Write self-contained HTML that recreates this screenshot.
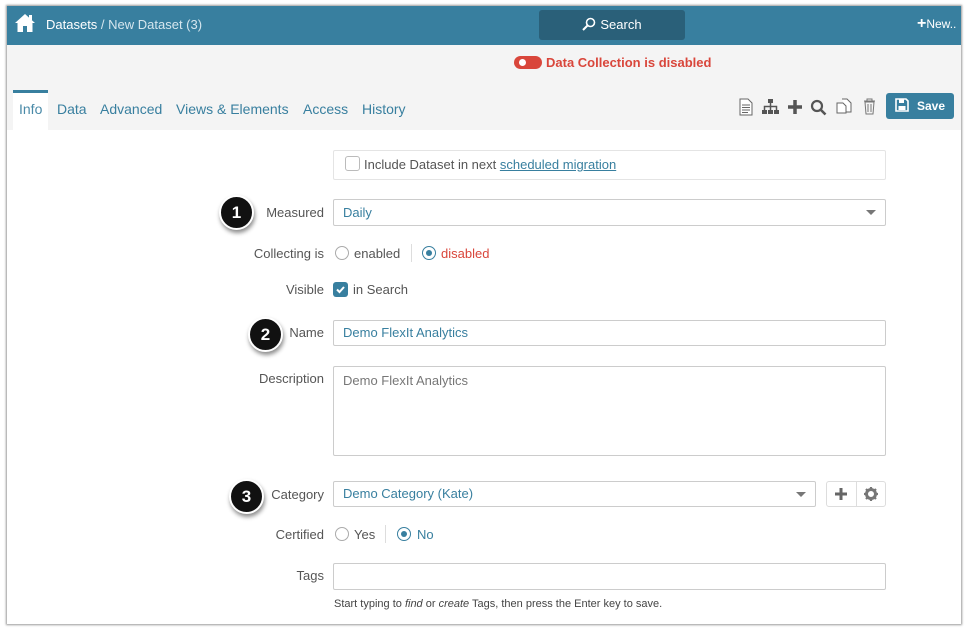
<!DOCTYPE html>
<html><head><style>
*{box-sizing:border-box;margin:0;padding:0}
body{width:968px;height:628px;background:#fff;font-family:"Liberation Sans",Arial,sans-serif;font-size:13px;color:#555;position:relative;overflow:hidden}
.frame{position:absolute;left:7px;top:6px;width:954px;height:618px;background:#fff;box-shadow:0 0 2px 1px #999;overflow:hidden}
.top{position:absolute;left:0;top:0;width:954px;height:39px;background:#387f9f;color:#fff}
.gray{position:absolute;left:0;top:39px;width:954px;height:85px;background:#f4f4f4}
.a{position:absolute;white-space:nowrap}
.lbl{position:absolute;right:637px;text-align:right;color:#555;font-size:13px}
.inp{position:absolute;left:326px;border:1px solid #ccc;border-radius:2px;background:#fff;color:#387f9f;padding-left:9px;font-size:13px}
.badge{position:absolute;border-radius:50%;background:#111;color:#fff;font-weight:bold;font-size:17px;text-align:center;box-shadow:1px 3px 4px rgba(0,0,0,.45);border:2px solid #fff;width:35px;height:35px;line-height:31px}
.radio{position:absolute;width:14px;height:14px;border:1px solid #aaa;border-radius:50%;background:#fff}
.radio.on{border-color:#387f9f}
.radio.on:after{content:"";position:absolute;left:3px;top:3px;width:6px;height:6px;border-radius:50%;background:#387f9f}
.tab{position:absolute;top:95px;color:#387f9f;font-size:14px}
</style></head><body>
<div class="frame">
<div class="top">
<svg class="a" style="left:7px;top:7px" width="22" height="20" viewBox="0 0 22 20"><path d="M11 1 L1 10 L3.5 10 L3.5 19 L9 19 L9 13 L13 13 L13 19 L18.5 19 L18.5 10 L21 10 Z" fill="#fff"/><rect x="15" y="2" width="3" height="5" fill="#fff"/></svg>
<div class="a" style="left:39px;top:11px;font-size:13px;color:#fff">Datasets <span style="color:#d5e6ee">/ New Dataset (3)</span></div>
<div class="a" style="left:532px;top:4px;width:146px;height:30px;background:#2a6079;border-radius:3px;color:#fff;font-size:13px;text-align:center;line-height:30px"><svg width="14" height="14" viewBox="0 0 14 14" style="vertical-align:-2px;margin-right:4px"><circle cx="8.5" cy="5.5" r="4" fill="none" stroke="#fff" stroke-width="1.6"/><path d="M5.5 8.5 L1 13" stroke="#fff" stroke-width="2"/></svg>Search</div>
<div class="a" style="left:910px;top:11px;color:#fff;font-size:12px"><b style="font-size:16px;line-height:12px">+</b>New..</div>
</div>
<div class="gray"></div>
<div class="a" style="left:507px;top:50px;width:28px;height:13px;border-radius:7px;background:#d9463b"><div style="position:absolute;left:5px;top:3px;width:7px;height:7px;border-radius:50%;background:#fff"></div></div>
<div class="a" style="left:539px;top:49px;color:#d9463b;font-weight:bold;font-size:13px">Data Collection is disabled</div>
<div class="a" style="left:6px;top:84px;width:35px;height:40px;background:#fff;border-top:3px solid #387f9f"></div>
<div class="tab" style="left:12px;color:#4a8aa8">Info</div>
<div class="tab" style="left:50px">Data</div>
<div class="tab" style="left:93px">Advanced</div>
<div class="tab" style="left:169px">Views &amp; Elements</div>
<div class="tab" style="left:296px">Access</div>
<div class="tab" style="left:355px">History</div>
<svg class="a" style="left:731px;top:92px" width="16" height="18" viewBox="0 0 16 18"><path d="M2 1h8l4 4v12H2z" fill="#fff" stroke="#666"/><path d="M4 7h8M4 9.5h8M4 12h8M4 14.5h6" stroke="#666"/></svg>
<svg class="a" style="left:755px;top:93px" width="17" height="16" viewBox="0 0 17 16"><rect x="6" y="0" width="5" height="4" fill="#555"/><rect x="0" y="11" width="5" height="4" fill="#555"/><rect x="6" y="11" width="5" height="4" fill="#555"/><rect x="12" y="11" width="5" height="4" fill="#555"/><path d="M8.5 4v7M2.5 11V7.5h12V11" stroke="#555" stroke-width="1.5" fill="none"/></svg>
<svg class="a" style="left:781px;top:94px" width="14" height="14"><path d="M7 0v14M0 7h14" stroke="#555" stroke-width="3.5"/></svg>
<svg class="a" style="left:803px;top:93px" width="17" height="17"><circle cx="7" cy="7" r="5" fill="none" stroke="#555" stroke-width="2.2"/><path d="M10.5 10.5l5 5" stroke="#555" stroke-width="2.6"/></svg>
<svg class="a" style="left:829px;top:92px" width="17" height="17"><path d="M1 5h6l3 3v7H1z M6 1h5l4 4v9h-5" fill="#fff" stroke="#666"/></svg>
<svg class="a" style="left:856px;top:92px" width="13" height="17"><path d="M1 3h11M4 3V1h5v2M2 4h9l-1 12H3z" fill="none" stroke="#777"/><path d="M5 6v8M8 6v8" stroke="#777"/></svg>
<div class="a" style="left:879px;top:87px;width:68px;height:26px;background:#387f9f;border-radius:3px;color:#fff;font-weight:bold;font-size:12px;line-height:26px;padding-left:9px"><svg width="14" height="14" viewBox="0 0 14 14" style="vertical-align:-2px;margin-right:8px"><path d="M1 1h10l2 2v10H1z" fill="none" stroke="#fff" stroke-width="1.6"/><rect x="4" y="1.5" width="5" height="3.5" fill="#fff"/><rect x="3.5" y="8" width="7" height="4" fill="#fff"/></svg>Save</div>

<div class="a" style="left:326px;top:144px;width:553px;height:30px;border:1px solid #e4e4e4;border-radius:2px"></div>
<div class="a" style="left:338px;top:150px;width:15px;height:15px;border:1px solid #bbb;border-radius:3px"></div>
<div class="a" style="left:357px;top:151px;color:#555">Include Dataset in next <span style="color:#387f9f;text-decoration:underline">scheduled migration</span></div>

<div class="badge" style="left:212px;top:189px">1</div>
<div class="lbl" style="top:199px">Measured</div>
<div class="inp" style="top:193px;width:553px;height:27px;line-height:25px">Daily<span style="position:absolute;right:9px;top:10px;border:5px solid transparent;border-top:5px solid #777;border-bottom:0"></span></div>

<div class="lbl" style="top:240px">Collecting is</div>
<div class="radio" style="left:328px;top:240px"></div>
<div class="a" style="left:347px;top:240px">enabled</div>
<div class="a" style="left:404px;top:238px;width:1px;height:18px;background:#ddd"></div>
<div class="radio on" style="left:415px;top:240px"></div>
<div class="a" style="left:434px;top:240px;color:#d9463b">disabled</div>

<div class="lbl" style="top:276px">Visible</div>
<div class="a" style="left:326px;top:276px;width:15px;height:15px;background:#387f9f;border-radius:3px"><svg width="15" height="15"><path d="M4 7.5l2.5 2.5 4.5-5" stroke="#fff" stroke-width="2" fill="none"/></svg></div>
<div class="a" style="left:346px;top:276px">in Search</div>

<div class="badge" style="left:241px;top:311px">2</div>
<div class="lbl" style="top:319px">Name</div>
<div class="inp" style="top:314px;width:553px;height:26px;line-height:24px">Demo FlexIt Analytics</div>

<div class="lbl" style="top:365px">Description</div>
<div class="inp" style="top:360px;width:553px;height:90px;color:#777;padding-top:6px">Demo FlexIt Analytics</div>

<div class="badge" style="left:222px;top:473px">3</div>
<div class="lbl" style="top:481px">Category</div>
<div class="inp" style="top:475px;width:483px;height:26px;line-height:24px">Demo Category (Kate)<span style="position:absolute;right:9px;top:10px;border:5px solid transparent;border-top:5px solid #777;border-bottom:0"></span></div>
<div class="a" style="left:819px;top:475px;width:60px;height:26px;border:1px solid #ddd;border-radius:3px;background:#fff"><div style="position:absolute;left:29px;top:0;width:1px;height:24px;background:#ddd"></div><svg style="position:absolute;left:8px;top:6px" width="12" height="12"><path d="M6 0v12M0 6h12" stroke="#666" stroke-width="3"/></svg><svg style="position:absolute;left:37px;top:5px" width="14" height="14" viewBox="0 0 14 14"><circle cx="7" cy="7" r="4.5" fill="none" stroke="#777" stroke-width="3"/><path d="M7 0v3M7 11v3M0 7h3M11 7h3M2 2l2 2M10 10l2 2M2 12l2-2M10 4l2-2" stroke="#777" stroke-width="2.2"/></svg></div>

<div class="lbl" style="top:521px">Certified</div>
<div class="radio" style="left:328px;top:521px"></div>
<div class="a" style="left:347px;top:521px">Yes</div>
<div class="a" style="left:378px;top:519px;width:1px;height:18px;background:#ddd"></div>
<div class="radio on" style="left:390px;top:521px"></div>
<div class="a" style="left:410px;top:521px;color:#387f9f">No</div>

<div class="lbl" style="top:562px">Tags</div>
<div class="inp" style="top:557px;width:553px;height:27px"></div>
<div class="a" style="left:327px;top:592px;font-size:11px;color:#444">Start typing to <i>find</i> or <i>create</i> Tags, then press the Enter key to save.</div>
</div>
</body></html>
